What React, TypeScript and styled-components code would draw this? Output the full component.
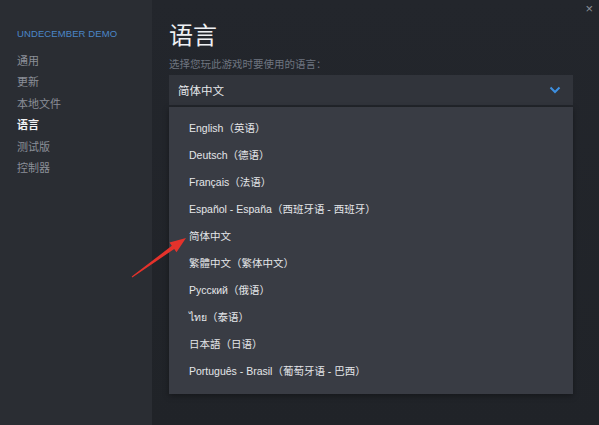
import React from "react";
import styled, { createGlobalStyle } from "styled-components";

const Global = createGlobalStyle`
  html, body { margin: 0; padding: 0; background: #1f2126; }
  body { font-family: "Liberation Sans", "Noto Sans CJK SC", sans-serif; }
`;

const Frame = styled.div`
  position: relative;
  display: flex;
  width: 599px;
  height: 425px;
  overflow: hidden;
  background: #1f2126;
`;

const Sidebar = styled.nav`
  width: 152px;
  flex: none;
  box-sizing: border-box;
  padding: 28px 0 0 17px;
  background: #2a2d33;
  display: flex;
  flex-direction: column;
`;

const GameTitle = styled.div`
  font-size: 9.5px;
  color: #4a86c8;
  letter-spacing: 0.1px;
  line-height: 12px;
  margin-bottom: 11px;
`;

const NavItem = styled.div<{ $active?: boolean }>`
  font-size: 11px;
  line-height: 21.4px;
  color: ${(p) => (p.$active ? "#f2f3f5" : "#8a8f98")};
  font-weight: ${(p) => (p.$active ? 700 : 400)};
`;

const Main = styled.main`
  flex: 1;
  box-sizing: border-box;
  padding: 21px 26px 0 17px;
  background: linear-gradient(180deg, #23262c 0%, #202328 100%);
  display: flex;
  flex-direction: column;
`;

const Title = styled.h1`
  margin: 0;
  font-size: 24px;
  font-weight: 400;
  line-height: 30px;
  color: #eef0f3;
`;

const Subtitle = styled.div`
  margin-top: 6px;
  font-size: 10.5px;
  line-height: 14px;
  color: #6f7580;
`;

const Select = styled.div`
  margin-top: 4px;
  height: 30px;
  box-sizing: border-box;
  padding: 0 12px 0 9px;
  background: #31343b;
  display: flex;
  align-items: center;
  justify-content: space-between;
  font-size: 11.5px;
  color: #e6e8eb;
`;

const List = styled.div`
  margin-top: 2px;
  height: 287px;
  box-sizing: border-box;
  padding: 8px 0 0 20px;
  background: #393c44;
  box-shadow: 0 2px 6px rgba(0, 0, 0, 0.35);
  display: flex;
  flex-direction: column;
`;

const Option = styled.div`
  font-size: 10.5px;
  line-height: 27px;
  color: #e4e6e9;
  white-space: nowrap;
`;

const Close = styled.div`
  position: absolute;
  top: 2px;
  right: 6px;
  font-size: 13px;
  color: #8c9098;
  line-height: 13px;
`;

const Arrow = styled.svg`
  position: absolute;
  left: 0;
  top: 0;
  pointer-events: none;
`;

const nav = ["通用", "更新", "本地文件", "语言", "测试版", "控制器"];
const langs = [
  "English（英语）",
  "Deutsch（德语）",
  "Français（法语）",
  "Español - España（西班牙语 - 西班牙）",
  "简体中文",
  "繁體中文（繁体中文）",
  "Русский（俄语）",
  "ไทย（泰语）",
  "日本語（日语）",
  "Português - Brasil（葡萄牙语 - 巴西）",
];

export default function App() {
  return (
    <Frame>
      <Global />
      <Sidebar>
        <GameTitle>UNDECEMBER DEMO</GameTitle>
        {nav.map((n) => (
          <NavItem key={n} $active={n === "语言"}>
            {n}
          </NavItem>
        ))}
      </Sidebar>
      <Main>
        <Title>语言</Title>
        <Subtitle>选择您玩此游戏时要使用的语言：</Subtitle>
        <Select>
          <span>简体中文</span>
          <svg width="12" height="8" viewBox="0 0 12 8">
            <path d="M1.5 1.5 L6 6 L10.5 1.5" fill="none" stroke="#3d8fe0" strokeWidth="2" />
          </svg>
        </Select>
        <List>
          {langs.map((l) => (
            <Option key={l}>{l}</Option>
          ))}
        </List>
      </Main>
      <Close>×</Close>
      <Arrow width="599" height="425" viewBox="0 0 599 425">
        <polygon
          points="131.7,276.6 171.8,245.8 169.5,242.5 186,238 176.5,252.3 174.2,249 132.3,277.4"
          fill="#e4322b"
        />
      </Arrow>
    </Frame>
  );
}
